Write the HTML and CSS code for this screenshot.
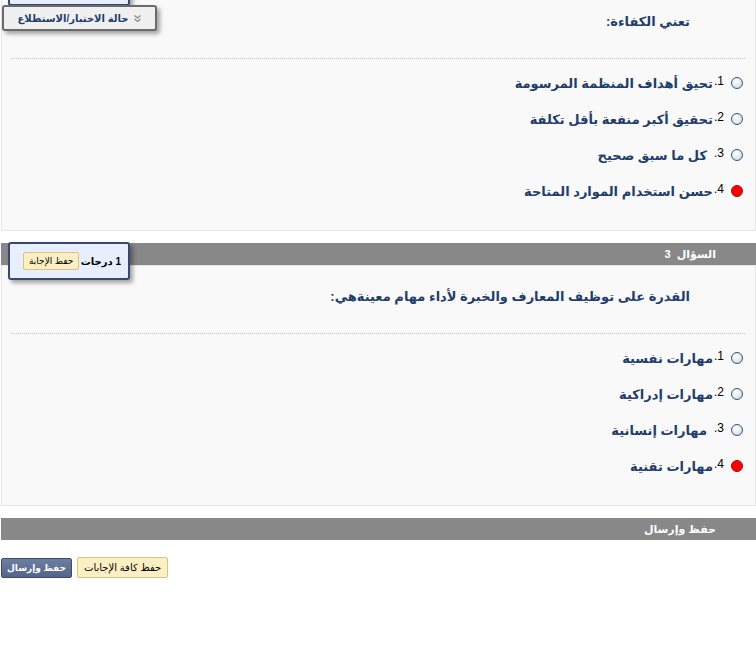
FILE: index.html
```html
<!DOCTYPE html>
<html dir="rtl">
<head>
<meta charset="utf-8">
<link rel="stylesheet" href="styles.css">
</head>
<body>
<div id="page">
	<div class="panel first">
		<div class="question">تعني الكفاءة:</div>
		<ul class="answers">
			<li><span class="radio"></span><span class="num">1.</span><span class="label">تحيق أهداف المنظمة المرسومة</span></li>
			<li><span class="radio"></span><span class="num">2.</span><span class="label">تحقيق أكبر منفعة بأقل تكلفة</span></li>
			<li><span class="radio"></span><span class="num">3.</span><span class="label spaced">كل ما سبق صحيح</span></li>
			<li><span class="radio checked"></span><span class="num">4.</span><span class="label">حسن استخدام الموارد المتاحة</span></li>
		</ul>
	</div>

	<div class="bar">السؤال&nbsp; 3</div>
	<div class="panel">
		<div class="question">القدرة على توظيف المعارف والخبرة لأداء مهام معينةهي:</div>
		<ul class="answers">
			<li><span class="radio"></span><span class="num">1.</span><span class="label">مهارات نفسية</span></li>
			<li><span class="radio"></span><span class="num">2.</span><span class="label">مهارات إدراكية</span></li>
			<li><span class="radio"></span><span class="num">3.</span><span class="label spaced">مهارات إنسانية</span></li>
			<li><span class="radio checked"></span><span class="num">4.</span><span class="label">مهارات تقنية</span></li>
		</ul>
	</div>

	<div class="bar">حفظ وإرسال</div>
	<div class="submit_row">
		<span class="btn navy">حفظ وإرسال</span>
		<span class="btn yellow">حفظ كافة الإجابات</span>
	</div>

	<!-- floating boxes that sit over the panels -->
	<div class="float_box cut_top"></div>
	<div class="float_box status">
		<span>حالة الاختبار/الاستطلاع</span>
		<svg width="9" height="9" viewBox="0 0 9 9"><path d="M1.5 1.5 L4.5 4 L7.5 1.5 M1.5 5 L4.5 7.5 L7.5 5" fill="none" stroke="#888" stroke-width="1.2"/></svg>
	</div>
	<div class="float_box points">
		<b>1 درجات</b>
		<span class="btn yellow small">حفظ الإجابة</span>
	</div>
</div>
</body>
</html>
```

FILE: styles.css
```css
body, div, ul, li {
	margin: 0;
	padding: 0;
}
body {
	background: #fff;
	font-family: "Liberation Sans", "DejaVu Sans", sans-serif;
	overflow: hidden;
}
#page {
	position: relative;
	margin: -10px 0 0 1px;
	width: 755px;
}
.panel {
	background: #f9f9f9;
	border: 1px solid #e6e6e6;
	height: 239px;
}
.question {
	padding: 21px 55px 26px 0;
	margin: 0 10px;
	height: 20px;
	line-height: 20px;
	font-size: 13px;
	font-weight: bold;
	color: #1f3d6b;
	border-bottom: 1px dotted #c4c4c4;
}
.answers {
	list-style: none;
	padding: 6px 12px 0 0;
}
.answers li {
	display: flex;
	align-items: center;
	height: 36px;
}
.radio {
	width: 10px;
	height: 10px;
	border: 1px solid #2b5784;
	border-radius: 50%;
	background: radial-gradient(circle at 40% 35%, #ffffff 0%, #e4e4e4 60%, #c9c9c9 100%);
	margin-left: 7px;
}
.radio.checked {
	background: #ff0000;
	border-color: #c00000;
}
.num {
	font-size: 12px;
	color: #000;
	margin-left: 1px;
	position: relative;
	top: -2px;
}
.label {
	font-size: 13px;
	font-weight: bold;
	color: #1f3d6b;
}
.label.spaced {
	margin-right: 6px;
}
.bar {
	background: #888888;
	color: #fff;
	font-size: 11px;
	font-weight: bold;
	height: 21px;
	line-height: 21px;
	padding-right: 40px;
	margin-top: 13px;
}
.panel + .bar {
	margin-top: 12px;
	height: 22px;
	line-height: 22px;
}
.submit_row {
	direction: ltr;
	display: flex;
	gap: 5px;
	align-items: flex-end;
	margin-top: 17px;
}
.btn {
	display: inline-block;
	font-size: 10px;
	height: 19px;
	line-height: 19px;
	padding: 0 6px;
	border-radius: 2px;
	direction: rtl;
	white-space: nowrap;
}
.btn.navy {
	background: linear-gradient(#6d7ea3, #54648a);
	border: 1px solid #3e4b6d;
	color: #fff;
	font-weight: bold;
	font-size: 9px;
	padding: 0 5px;
	height: 18px;
	line-height: 18px;
}
.btn.yellow {
	background: #fcefc4;
	border: 1px solid #dcc27a;
	color: #000;
}
.btn.small {
	height: 16px;
	line-height: 16px;
	padding: 0 5px;
	font-size: 9px;
}
.float_box {
	position: absolute;
	border-radius: 3px;
	box-shadow: 3px 3px 4px rgba(0, 0, 0, 0.35);
}
.cut_top {
	left: 7px;
	top: 0;
	width: 118px;
	height: 12px;
	background: #e7efff;
	border: 2px solid #3b4770;
}
.status {
	left: 1px;
	top: 15px;
	width: 151px;
	height: 22px;
	background: #f0f0f0;
	border: 2px solid #6b6b6b;
	display: flex;
	align-items: center;
	justify-content: center;
	gap: 4px;
	direction: ltr;
	font-size: 10px;
	font-weight: bold;
	color: #1f3d6b;
	white-space: nowrap;
}
.points {
	left: 7px;
	top: 252px;
	width: 122px;
	height: 38px;
	box-sizing: border-box;
	padding: 0 7px 0 13px;
	background: #e7efff;
	border: 2px solid #3b4770;
	display: flex;
	align-items: center;
	justify-content: space-between;
	font-size: 10px;
	white-space: nowrap;
}
.points b {
	color: #000;
}
```
